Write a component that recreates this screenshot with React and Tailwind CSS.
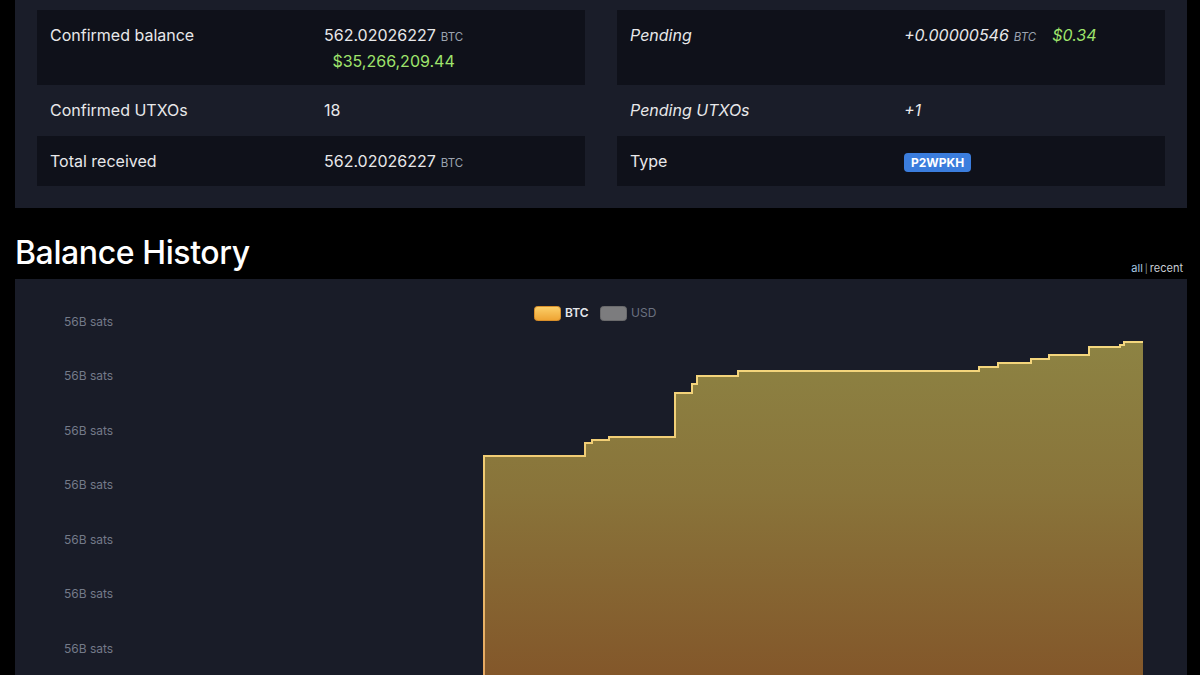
import React from "react";

const font = { fontFamily: "Inter, 'Noto Sans', sans-serif" };

function Btc({ italic }) {
  return (
    <span className={`ml-[5px] text-[11.5px] text-[#9ca3af] ${italic ? "italic" : ""}`}>BTC</span>
  );
}

function Row({ striped, h, label, children, italic }) {
  return (
    <div
      className={`grid grid-cols-[287px_1fr] py-[13px] leading-[24px] ${
        striped ? "bg-[#0f111a]" : ""
      } ${h}`}
    >
      <div className={`pl-[13px] text-[16px] text-[#e8e8ea] ${italic ? "italic" : ""}`}>{label}</div>
      <div className="text-[16px] text-[#e8e8ea]">{children}</div>
    </div>
  );
}

function Chart() {
  const labels = [0, 1, 2, 3, 4, 5, 6];
  const area =
    "M469,420 V177 H570 V164 H577 V161 H594 V158 H660 V114 H677 V105 H682 V97 H723 V92 H964 V88 H983 V84 H1016 V80 H1034 V76 H1074 V68 H1105 V66 H1109 V63 H1128 V420 Z";
  const line =
    "M469,420 V177 H570 V164 H577 V161 H594 V158 H660 V114 H677 V105 H682 V97 H723 V92 H964 V88 H983 V84 H1016 V80 H1034 V76 H1074 V68 H1105 V66 H1109 V63 H1128";
  return (
    <svg width="1172" height="420" viewBox="0 0 1172 420" className="block">
      <defs>
        <linearGradient id="fillg" x1="0" y1="63" x2="0" y2="396" gradientUnits="userSpaceOnUse">
          <stop offset="0" stopColor="#8d8343" />
          <stop offset="0.45" stopColor="#89743a" />
          <stop offset="1" stopColor="#83572a" />
        </linearGradient>
        <linearGradient id="lineg" x1="0" y1="63" x2="0" y2="396" gradientUnits="userSpaceOnUse">
          <stop offset="0" stopColor="#f4d77e" />
          <stop offset="0.5" stopColor="#f0c870" />
          <stop offset="1" stopColor="#e6a862" />
        </linearGradient>
        <linearGradient id="swatch" x1="0" y1="0" x2="0" y2="1">
          <stop offset="0" stopColor="#fcd06a" />
          <stop offset="1" stopColor="#eea332" />
        </linearGradient>
      </defs>
      {labels.map((i) => (
        <text
          key={i}
          x="49"
          y={46.5 + i * 54.5}
          fontSize="12"
          fill="#747a89"
          style={font}
        >
          56B sats
        </text>
      ))}
      <rect x="519.5" y="27.5" width="26" height="14" rx="3" fill="url(#swatch)" stroke="#d98f2a" strokeWidth="1" />
      <text x="550" y="38" fontSize="12" fontWeight="600" fill="#e5e7eb" style={font}>
        BTC
      </text>
      <rect x="585.5" y="27.5" width="26" height="14" rx="3" fill="#7c7c7e" stroke="#6a6a6c" strokeWidth="1" />
      <text x="616" y="38" fontSize="12" fill="#6b7180" style={font}>
        USD
      </text>
      <path d={area} fill="url(#fillg)" />
      <path d={line} fill="none" stroke="url(#lineg)" strokeWidth="2" />
    </svg>
  );
}

export default function App() {
  return (
    <div className="min-h-[675px] h-[675px] overflow-hidden bg-black" style={font}>
      <div className="ml-[15px] w-[1172px] bg-[#1a1d29] px-[22px] pt-[10px] pb-[22px]">
        <div className="grid grid-cols-2 gap-[32px]">
          <div>
            <Row striped h="h-[75px]" label="Confirmed balance">
              <div className="inline-flex flex-col items-center">
                <div>
                  562.02026227
                  <Btc />
                </div>
                <div className="text-[#9fe46c]">$35,266,209.44</div>
              </div>
            </Row>
            <Row h="h-[51px]" label="Confirmed UTXOs">18</Row>
            <Row striped h="h-[50px]" label="Total received">
              562.02026227
              <Btc />
            </Row>
          </div>
          <div>
            <Row striped h="h-[75px]" italic label="Pending">
              <span className="italic">+0.00000546</span>
              <Btc italic />
              <span className="ml-[16px] italic text-[#9fe46c]">$0.34</span>
            </Row>
            <Row h="h-[51px]" italic label="Pending UTXOs">
              <span className="italic">+1</span>
            </Row>
            <Row striped h="h-[50px]" label="Type">
              <span className="inline-flex h-[19px] items-center rounded-[4px] bg-[#3b7ddd] px-[7px] align-middle text-[12px] font-bold leading-none text-white">
                P2WPKH
              </span>
            </Row>
          </div>
        </div>
      </div>
      <div className="mt-[25px] flex w-[1183px] items-end justify-between pl-[15px]">
        <h2 className="mb-[6px] text-[32px] font-medium leading-[40px] tracking-[-0.4px] text-white">
          Balance History
        </h2>
        <div className="mb-[3px] text-[11px] leading-[14px]">
          <span className="text-[#a8c8e0]">all</span>
          <span className="mx-[2px] text-[9px] text-[#9aa0a8]">|</span>
          <span className="text-[#c9cdd3]">recent</span>
        </div>
      </div>
      <div className="ml-[15px] w-[1172px] bg-[#191c28]">
        <Chart />
      </div>
    </div>
  );
}
